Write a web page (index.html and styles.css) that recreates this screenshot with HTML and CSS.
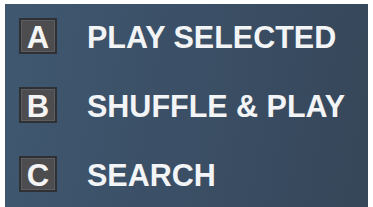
FILE: index.html
```html
<!DOCTYPE html>
<html lang="en">
<head>
    <meta charset="UTF-8">
    <title>Menu</title>
    <link rel="stylesheet" href="styles.css">
</head>
<body>
    <div class="menu">
        <div class="menu-item">
            <span class="key">A</span>
            <span class="label">PLAY SELECTED</span>
        </div>
        <div class="menu-item">
            <span class="key">B</span>
            <span class="label">SHUFFLE &amp; PLAY</span>
        </div>
        <div class="menu-item">
            <span class="key">C</span>
            <span class="label">SEARCH</span>
        </div>
    </div>
</body>
</html>
```

FILE: styles.css
```css
* {
    margin: 0;
    padding: 0;
    box-sizing: border-box;
}

body {
    background: #ffffff;
    font-family: 'Liberation Sans', Arial, sans-serif;
}

.menu {
    margin: 4px 5px 0 5px;
    width: 363px;
    height: 203px;
    padding: 14px 0 0 14px;
    display: flex;
    flex-direction: column;
    gap: 33px;
    background: linear-gradient(100deg, #3f5870 0%, #3b5067 45%, #364659 100%);
}

.menu-item {
    display: flex;
    align-items: center;
    height: 36px;
}

.key {
    width: 38px;
    height: 36px;
    display: flex;
    justify-content: center;
    align-items: center;
    background: #4d4d50;
    border: 2px solid #2e3034;
    box-shadow: inset 0 0 0 1px #5c5d60;
    color: #f4f4f4;
    font-weight: bold;
    font-size: 31px;
    line-height: 1;
    padding-top: 2px;
}

.label {
    margin-left: 30px;
    color: #f2f4f6;
    font-weight: bold;
    font-size: 30.5px;
    line-height: 36px;
    padding-top: 1px;
}
```
